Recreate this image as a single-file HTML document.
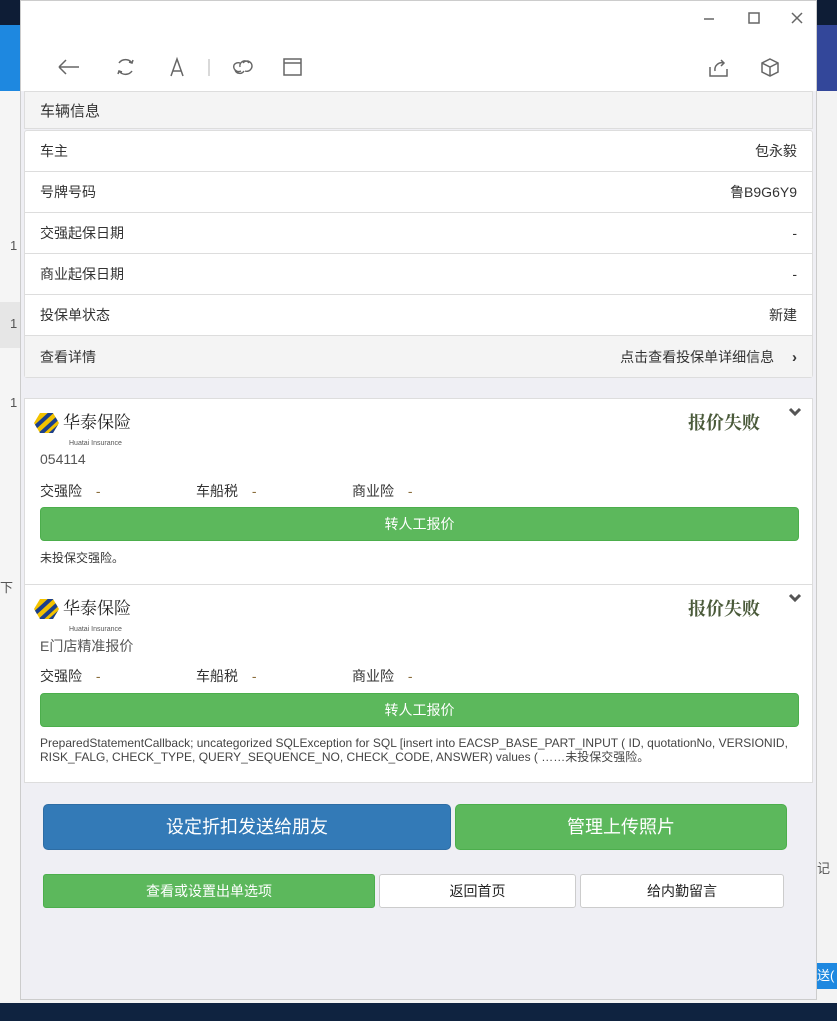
<!DOCTYPE html>
<html><head><meta charset="utf-8"><style>
*{box-sizing:border-box;margin:0;padding:0}
body{width:837px;height:1021px;overflow:hidden;position:relative;background:#f3f3f3;font-family:"Liberation Sans","Noto Sans CJK SC",sans-serif;font-size:14px;color:#333}
.bg1{position:absolute;left:0;top:0;width:837px;height:25px;background:#0e1d36}
.bg2{position:absolute;left:0;top:25px;width:837px;height:66px;background:#1e88e0}
.bg2r{position:absolute;left:817px;top:25px;width:20px;height:66px;background:#33479a}
.bgb{position:absolute;left:0;top:1003px;width:837px;height:18px;background:#0f2340}
.win{position:absolute;left:20px;top:0px;width:797px;height:1000px;background:#efeff4;border:1px solid #ccc}
.tb{position:absolute;left:0;top:0;width:795px;height:90px;background:#fff}
.abs{position:absolute}
.hdr{position:absolute;left:3px;top:90px;width:789px;height:38px;background:#f4f4f4;border:1px solid #ddd;padding:8px 15px;font-size:15px}
.list{position:absolute;left:3px;top:129px;width:789px;background:#fff;border:1px solid #ddd;border-radius:3px}
.row{height:41px;border-bottom:1px solid #ddd;display:flex;justify-content:space-between;align-items:center;padding:0 15px;font-size:14px}
.row:last-child{border-bottom:none;background:#f4f4f4}
.card{position:absolute;left:3px;width:789px;background:#fff;border:1px solid #ddd}
.fail{position:absolute;right:52px;top:10px;font-family:"Noto Serif CJK SC",serif;font-size:18px;font-weight:bold;color:#4a5a3a}
.chev{position:absolute;right:10px;top:8px}
.gbtn{position:absolute;left:15px;width:759px;height:34px;background:#5cb85c;border:1px solid #4cae4c;border-radius:4px;color:#fff;text-align:center;line-height:32px;font-size:14px}
.ins{position:absolute;top:0;font-size:14px}
.ins b{font-weight:normal;color:#8a6d3b;margin-left:10px}
.logo{position:absolute;left:8px;top:10px}
</style></head><body>
<div class="bg1"></div><div class="bg2"></div><div class="bg2r"></div><div class="bgb"></div>
<div class="abs" style="left:0;top:91px;width:20px;height:910px;background:#f5f5f5"></div>
<div class="abs" style="left:0;top:302px;width:20px;height:46px;background:#e6e6e6"></div>
<div class="abs" style="left:10px;top:238px;font-size:13px;color:#555">1</div>
<div class="abs" style="left:10px;top:316px;font-size:13px;color:#555">1</div>
<div class="abs" style="left:10px;top:395px;font-size:13px;color:#555">1</div>
<div class="abs" style="left:0;top:577px;font-size:13px;color:#555">下</div>
<div class="abs" style="left:817px;top:963px;width:20px;height:26px;background:#1e88e0;color:#fff;font-size:13px;line-height:26px">送(</div>
<div class="abs" style="left:817px;top:858px;font-size:13px;color:#555">记</div>
<div class="win">
 <div class="tb">
  <svg class="abs" style="left:0;top:0" width="795" height="90" fill="none" stroke="#666" stroke-width="1.5">
   <path d="M683 18h10M728 12h10v10h-10z M771 12l10 10M781 12l-10 10"/>
   <path d="M38 66h20M38 66l7-7M38 66l7 7"/>
   <path d="M98 62a8 8 0 0 1 13 0M111 70a8 8 0 0 1 -13 0" />
   <path d="M108 61l3 1 1-3M101 71l-3-1-1 3"/>
   <path d="M150 75l6-17 6 17M152 70h8"/>
   <path d="M188 58v17" stroke="#ccc"/>
   <path d="M219 66a5 5 0 0 1 9-4M223 70a5 5 0 0 1-9 -1M222 62a5 5 0 0 1 8 6 5 5 0 0 1-6 2M220 70a5 5 0 0 1 -7-6 5 5 0 0 1 6-2" stroke-width="1.4"/>
   <path d="M263 58h17v16h-17zM263 62h17"/>
   <path d="M689 66v9h17v-7M694 70a7 7 0 0 1 9-8M700 59l3 3-3 3"/>
   <path d="M749 58l8 4v9l-8 4-8-4v-9zM741 62l8 4 8-4M749 66v9"/>
  </svg>
 </div>
 <div class="hdr">车辆信息</div>
 <div class="list">
  <div class="row"><span>车主</span><span>包永毅</span></div>
  <div class="row"><span>号牌号码</span><span>鲁B9G6Y9</span></div>
  <div class="row"><span>交强起保日期</span><span>-</span></div>
  <div class="row"><span>商业起保日期</span><span>-</span></div>
  <div class="row"><span>投保单状态</span><span>新建</span></div>
  <div class="row"><span>查看详情</span><span>点击查看投保单详细信息 <b style="margin-left:14px;font-size:15px">›</b></span></div>
 </div>
 <div class="card" style="top:397px;height:187px">
  <div class="logo"><svg width="110" height="40"><clipPath id="h1"><path d="M1 14l6-10h13l6 10-6 10h-13z"/></clipPath><g clip-path="url(#h1)"><rect width="30" height="30" fill="#f2c200"/><path d="M-2 22l24-22M4 28l24-22M12 30l20-18" stroke="#1b3f8c" stroke-width="4"/></g><text x="30" y="19" font-family="Noto Serif CJK SC,serif" font-size="17" fill="#222">华泰保险</text><text x="36" y="36" font-size="7" fill="#555" font-family="Liberation Sans,sans-serif">Huatai Insurance</text></svg></div>
  <div class="fail">报价失败</div>
  <svg class="chev" width="14" height="10"><path d="M2 2l5 5 5-5" stroke="#555" stroke-width="3" fill="none"/></svg>
  <div class="abs" style="left:15px;top:52px;color:#555">054114</div>
  <div class="abs" style="left:15px;top:82px;width:760px;height:20px">
   <div class="ins" style="left:0">交强险 <b>-</b></div><div class="ins" style="left:156px">车船税 <b>-</b></div><div class="ins" style="left:312px">商业险 <b>-</b></div>
  </div>
  <div class="gbtn" style="top:108px">转人工报价</div>
  <div class="abs" style="left:15px;top:150px;font-size:12px">未投保交强险。</div>
 </div>
 <div class="card" style="top:583px;height:199px">
  <div class="logo"><svg width="110" height="40"><clipPath id="h2"><path d="M1 14l6-10h13l6 10-6 10h-13z"/></clipPath><g clip-path="url(#h2)"><rect width="30" height="30" fill="#f2c200"/><path d="M-2 22l24-22M4 28l24-22M12 30l20-18" stroke="#1b3f8c" stroke-width="4"/></g><text x="30" y="19" font-family="Noto Serif CJK SC,serif" font-size="17" fill="#222">华泰保险</text><text x="36" y="36" font-size="7" fill="#555" font-family="Liberation Sans,sans-serif">Huatai Insurance</text></svg></div>
  <div class="fail">报价失败</div>
  <svg class="chev" width="14" height="10"><path d="M2 2l5 5 5-5" stroke="#555" stroke-width="3" fill="none"/></svg>
  <div class="abs" style="left:15px;top:51px;color:#555">E门店精准报价</div>
  <div class="abs" style="left:15px;top:81px;width:760px;height:20px">
   <div class="ins" style="left:0">交强险 <b>-</b></div><div class="ins" style="left:156px">车船税 <b>-</b></div><div class="ins" style="left:312px">商业险 <b>-</b></div>
  </div>
  <div class="gbtn" style="top:108px">转人工报价</div>
  <div class="abs" style="left:15px;top:151px;font-size:12px;line-height:14px;width:765px;color:#444">PreparedStatementCallback; uncategorized SQLException for SQL [insert into EACSP_BASE_PART_INPUT ( ID, quotationNo, VERSIONID, RISK_FALG, CHECK_TYPE, QUERY_SEQUENCE_NO, CHECK_CODE, ANSWER) values ( ……未投保交强险。</div>
 </div>
 <div class="abs" style="left:22px;top:803px;width:408px;height:46px;background:#337ab7;border:1px solid #2e6da4;border-radius:5px;color:#fff;font-size:18px;text-align:center;line-height:44px">设定折扣发送给朋友</div>
 <div class="abs" style="left:434px;top:803px;width:332px;height:46px;background:#5cb85c;border:1px solid #4cae4c;border-radius:5px;color:#fff;font-size:18px;text-align:center;line-height:44px">管理上传照片</div>
 <div class="abs" style="left:22px;top:873px;width:332px;height:34px;background:#5cb85c;border:1px solid #4cae4c;border-radius:3px;color:#fff;text-align:center;line-height:32px">查看或设置出单选项</div>
 <div class="abs" style="left:358px;top:873px;width:197px;height:34px;background:#fff;border:1px solid #ccc;border-radius:3px;text-align:center;line-height:32px;color:#222">返回首页</div>
 <div class="abs" style="left:559px;top:873px;width:204px;height:34px;background:#fff;border:1px solid #ccc;border-radius:3px;text-align:center;line-height:32px;color:#222">给内勤留言</div>
</div>
</body></html>
